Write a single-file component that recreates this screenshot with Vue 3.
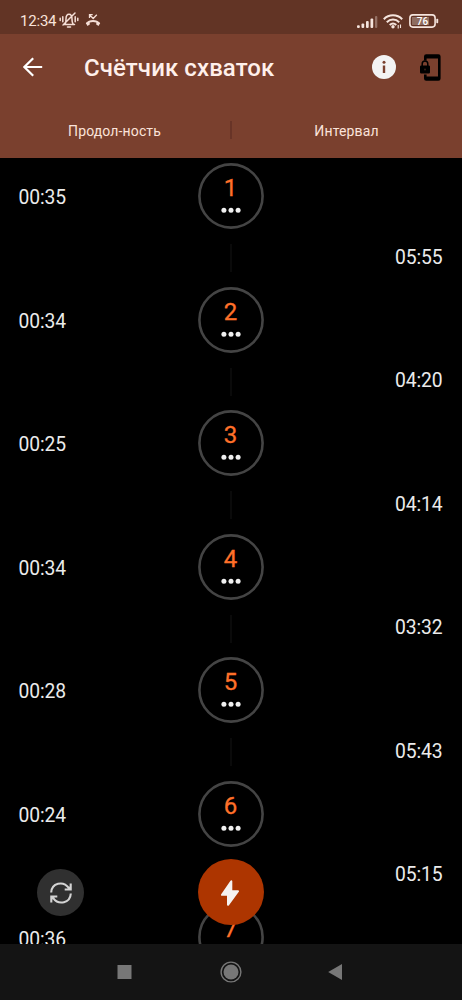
<script setup>
const durations = ['00:35', '00:34', '00:25', '00:34', '00:28', '00:24', '00:36']
const intervals = ['05:55', '04:20', '04:14', '03:32', '05:43', '05:15', '']
const rows = durations.map((duration, i) => ({ n: i + 1, duration, interval: intervals[i] }))
</script>

<template>
  <div class="screen">
    <div class="status">
      <span class="clock">12:34</span>
      <svg class="bell" width="20" height="18" viewBox="0 0 20 18" fill="none" stroke="#f5ded6" stroke-width="1.500" stroke-linecap="round">
        <path d="M4.500 13.500h11M6 13c1-1 1-3 1-5 0-3 1-4.800 3-4.800s3 1.800 3 4.800c0 2 0 4 1.300 5M8.500 16h3M16 2L4 14M3.800 5.800v5M1.200 7.300v2.200M16.200 5.800v5M18.800 7.300v2.200" />
      </svg>
      <svg class="missed" width="16" height="14" viewBox="0 0 16 14" fill="none" stroke="#f5ded6">
        <path d="M1.600 10.800C4.800 7.200 11.200 7.200 14.400 10.800" stroke-width="2" />
        <path d="M.8 10l3.200-1.500 1 2.800L2.500 13zM15.200 10L12 8.500l-1 2.800 2.500 1.700z" fill="#f5ded6" stroke="none" />
        <path d="M4.500 5V1.700h3.200M4.700 2l3.500 3.500 3.600-3.700" stroke-width="1.300" />
      </svg>
      <div class="spacer"></div>
      <svg class="signal" width="21" height="14" viewBox="0 0 21 14" fill="#f5e4dd">
        <rect x="0" y="10.200" width="2.800" height="2.800" rx="1" />
        <rect x="4.500" y="8.500" width="2.700" height="4.500" rx="1" />
        <rect x="9" y="6" width="2.700" height="7" rx="1" />
        <rect x="13.500" y="3.500" width="2.700" height="9.500" rx="1" />
        <rect x="18" y="1" width="2.300" height="12" rx="1" opacity=".35" />
      </svg>
      <svg class="wifi" width="20" height="15" viewBox="0 0 20 15" fill="none" stroke="#f5e4dd" stroke-width="2">
        <path d="M.8 5.200c5-5.200 13.400-5.200 18.400 0M3.800 8.200c3.500-3.500 8.900-3.500 12.400 0M6.700 11c2-1.900 4.600-1.900 6.600 0" />
        <circle cx="10" cy="12.700" r="1.700" fill="#f5e4dd" stroke="none" />
        <path d="M15.200 11v3.500M17.500 10.500V14" stroke-width="1.100" />
      </svg>
      <div class="battery">
        <svg width="30" height="14" viewBox="0 0 30 14">
          <rect x="3" y="3" width="17" height="8" fill="#8f6d60" />
          <rect x=".9" y=".9" width="25.200" height="12.200" rx="3" fill="none" stroke="#f5e4dd" stroke-width="1.600" />
          <rect x="27.300" y="4.800" width="1.900" height="4.400" rx=".7" fill="#f5e4dd" />
        </svg>
        <span>76</span>
      </div>
    </div>

    <header class="header">
      <div class="bar">
        <svg class="back" width="20" height="20" viewBox="0 0 20 20" fill="none" stroke="#fff" stroke-width="2.200">
          <path d="M19.200 10H2M10.200 1.200L1.400 10l8.800 8.800" />
        </svg>
        <h1>Счётчик схваток</h1>
        <div class="spacer"></div>
        <svg class="info" width="24" height="24" viewBox="0 0 24 24">
          <circle cx="12" cy="12" r="12" fill="#f3f3f3" />
          <circle cx="12" cy="7.200" r="1.500" fill="#7a402e" />
          <path d="M10.800 10.500h2.400v7.500h-2.400z" fill="#7a402e" />
        </svg>
        <svg class="lock" width="21" height="27" viewBox="0 0 21 27">
          <path fill-rule="evenodd" d="M4 6.500V2.500Q4 .3 6.200 .3H18.400Q20.600 .3 20.600 2.500V24.500Q20.600 26.700 18.400 26.700H6.200Q4 26.700 4 24.500V20.500H6.600V22.600H18V4.400H6.600V6.500z" />
          <path d="M1.200 11.500h7.600q1.200 0 1.200 1.200v5.500q0 1.300-1.200 1.300H1.200Q0 19.500 0 18.200v-5.500q0-1.200 1.200-1.200z" />
          <path d="M2.200 12V9.900a2.800 2.800 0 0 1 5.600 0V12" fill="none" stroke="#000" stroke-width="1.500" />
          <circle cx="5" cy="15.500" r="1" fill="#3a1e16" />
        </svg>
      </div>
      <div class="tabs">
        <span>Продол-ность</span>
        <i></i>
        <span>Интервал</span>
      </div>
    </header>

    <main class="list">
      <div v-for="row in rows" :key="row.n" class="row">
        <span class="duration">{{ row.duration }}</span>
        <div class="middle">
          <div class="ring">
            <svg class="outline" width="66" height="66" viewBox="0 0 66 66">
              <circle cx="33" cy="33" r="31.600" fill="none" stroke="#444" stroke-width="2.600" />
              <g fill="#f0f0f0">
                <circle cx="25.900" cy="47.300" r="2.500" />
                <circle cx="33" cy="47.300" r="2.500" />
                <circle cx="40.100" cy="47.300" r="2.500" />
              </g>
            </svg>
            <b>{{ row.n }}</b>
          </div>
          <div class="line"></div>
        </div>
        <span class="interval">{{ row.interval }}</span>
      </div>
    </main>

    <button class="refresh">
      <svg width="22" height="22" viewBox="0 0 22 22" fill="none" stroke="#d4d4d4" stroke-width="2.100">
        <path d="M1.200 10.500C1.700 1.300 13-2 19 6.200M20.800 11.500C20.300 20.700 9 24 3 15.800" />
        <path d="M20.700 1.500v6h-6M1.300 20.500v-6h6" />
        <path d="M20.700 3.500v4h-4zM1.300 18.500v-4h4z" fill="#d4d4d4" stroke="none" />
      </svg>
    </button>
    <button class="start">
      <svg width="18" height="26" viewBox="0 0 18 26" fill="#f5f2f0" stroke="#f5f2f0" stroke-width="2" stroke-linejoin="round">
        <path d="M10.300 1.200L1 14.800H7V24.800L17 11.200H10.300z" />
      </svg>
    </button>

    <nav class="nav">
      <svg width="462" height="56" viewBox="0 0 462 56" fill="#777">
        <rect x="117.500" y="21" width="14" height="14" />
        <circle cx="231" cy="28" r="7.500" />
        <circle cx="231" cy="28" r="9.900" fill="none" stroke="#777" stroke-width="1.400" />
        <path d="M342 20v16l-13.800-8z" />
      </svg>
    </nav>
  </div>
</template>

<style>
body { margin: 0; background: #000; }
</style>

<style scoped>
.screen {
  position: relative;
  display: flex;
  flex-direction: column;
  width: 462px;
  height: 1000px;
  overflow: hidden;
  background: #000;
  color: #ebebeb;
  font-family: Roboto, "Liberation Sans", sans-serif;
}
.spacer { flex: 1; }
.status {
  display: flex;
  align-items: center;
  flex: none;
  box-sizing: border-box;
  height: 34px;
  padding: 8px 20px 0 20px;
  background: #623425;
}
.clock { width: 39px; font-size: 15px; line-height: 18px; color: #f9e3da; letter-spacing: -.2px; }
.bell { margin-top: -2px; }
.missed { margin-left: 6px; margin-top: -2px; }
.signal { margin-top: 2px; }
.wifi { margin-left: 5px; }
.battery { position: relative; width: 30px; height: 14px; margin: -1px 3px 0 6px; }
.battery svg { display: block; }
.battery span {
  position: absolute;
  inset: 0 3px 0 0;
  text-align: center;
  font-size: 10px;
  line-height: 15px;
  font-weight: 500;
  color: #fff;
}
.header { flex: none; height: 124px; background: #7a402e; }
.bar { display: flex; align-items: center; height: 66px; padding: 0 21px 0 23px; }
h1 { margin: 2px 0 0 41px; font-size: 24px; line-height: 32px; font-weight: 500; letter-spacing: .09px; color: #fff0eb; white-space: nowrap; }
.lock { margin-left: 24px; }
.tabs {
  display: grid;
  grid-template-columns: 1fr 2px 1fr;
  align-items: center;
  height: 62px;
  font-size: 14px;
  letter-spacing: .13px;
  text-align: center;
  color: #fae3da;
}
.tabs i { height: 18px; margin-top: -2px; background: #683427; }
.tabs span { padding-right: 1px; }
.list { flex: 1; min-height: 0; overflow: hidden; }
.row {
  display: grid;
  grid-template-columns: 1fr 66px 1fr;
  box-sizing: border-box;
  height: 123.55px;
  padding: 5px 19.500px 0 18.500px;
  font-size: 19.300px;
  line-height: 24px;
  letter-spacing: -.1px;
}
.duration { padding-top: 23.300px; }
.interval { padding-top: 82.500px; text-align: right; }
.middle { width: 66px; }
.ring {
  position: relative;
  box-sizing: border-box;
  height: 66px;
  padding-top: 10px;
  text-align: center;
}
.outline { position: absolute; inset: 0; }
.ring b { display: block; font-size: 24px; line-height: 30px; font-weight: 400; letter-spacing: 0; color: #ff7029; -webkit-text-stroke: .3px #ff7029; }
.line { width: 2px; height: 28px; margin: 15px auto 0; background: #0a0a0a; }
button { display: grid; place-items: center; padding: 0; border: 0; border-radius: 50%; }
.refresh { position: absolute; left: 37px; top: 869px; width: 47px; height: 47px; background: #303030; }
.start { position: absolute; left: 198px; top: 859px; width: 66px; height: 66px; background: #ad3500; }
.start svg { margin: 1px 3px 0 0; }
.nav { flex: none; height: 56px; background: #141414; }
.nav svg { display: block; }
</style>
